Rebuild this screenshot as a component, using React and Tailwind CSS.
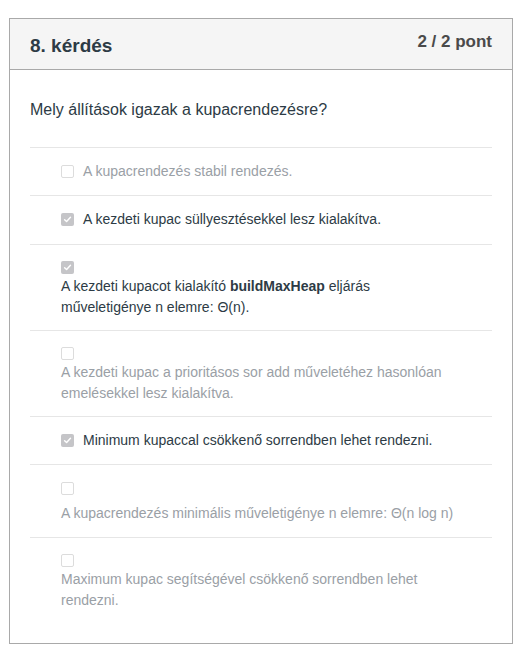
import React from "react";

function Box({ checked }) {
  if (checked) {
    return (
      <span className="inline-flex h-[13px] w-[13px] shrink-0 items-center justify-center rounded-[2px] bg-[#c5c5c8]">
        <svg width="9" height="9" viewBox="0 0 10 10" fill="none">
          <path d="M1.8 5.2 L4 7.3 L8.3 2.6" stroke="#ffffff" strokeWidth="1.6" strokeLinecap="round" strokeLinejoin="round" />
        </svg>
      </span>
    );
  }
  return <span className="inline-block h-[13px] w-[13px] shrink-0 rounded-[2px] border border-[#dcdcdc] bg-white" />;
}

export default function App() {
  const dark = "text-[#2d3b45]";
  const light = "text-[#9aa0a6]";
  return (
    <div className="min-h-[652px] bg-white pl-[9px] pt-[18px]" style={{ fontFamily: '"Liberation Sans", Arial, sans-serif' }}>
      <div className="w-[504px] border border-[#a9a9a9] bg-white">
        <div className="flex h-[51px] justify-between border-b border-[#a9a9a9] bg-[#f5f5f5] pl-[20px] pr-[20px]">
          <div className={`pt-[14px] text-[19px] font-bold leading-[26px] ${dark}`}>8. kérdés</div>
          <div className="pt-[13px] text-[17px] font-bold leading-[20px] text-[#4a4a4a]">2 / 2 pont</div>
        </div>
        <div className="px-5 pb-[32px] pt-[28px]">
          <div className={`text-[16px] leading-[24px] ${dark}`}>Mely állítások igazak a kupacrendezésre?</div>
          <div className="mt-[25px] border-t border-[#e6e6e6] text-[14px] leading-[21px]">
            <div className="flex items-center gap-[9px] border-b border-[#e6e6e6] py-[13px] pl-[31px]">
              <Box checked={false} />
              <span className={light}>A kupacrendezés stabil rendezés.</span>
            </div>
            <div className="flex items-center gap-[9px] border-b border-[#e6e6e6] pb-[14px] pt-[13px] pl-[31px]">
              <Box checked />
              <span className={dark}>A kezdeti kupac süllyesztésekkel lesz kialakítva.</span>
            </div>
            <div className="border-b border-[#e6e6e6] pb-[12px] pl-[31px] pt-[16px]">
              <div className="flex h-[13px]"><Box checked /></div>
              <div className={`mt-[2px] ${dark}`}>
                A kezdeti kupacot kialakító <b className="font-bold">buildMaxHeap</b> eljárás
                <br />
                műveletigénye n elemre: Θ(n).
              </div>
            </div>
            <div className="border-b border-[#e6e6e6] pb-[12px] pl-[31px] pt-[16px]">
              <div className="flex h-[13px]"><Box checked={false} /></div>
              <div className={`mt-[2px] ${light}`}>
                A kezdeti kupac a prioritásos sor add műveletéhez hasonlóan
                <br />
                emelésekkel lesz kialakítva.
              </div>
            </div>
            <div className="flex items-center gap-[9px] border-b border-[#e6e6e6] py-[13px] pl-[31px]">
              <Box checked />
              <span className={dark}>Minimum kupaccal csökkenő sorrendben lehet rendezni.</span>
            </div>
            <div className="border-b border-[#e6e6e6] pb-[13px] pl-[31px] pt-[17px]">
              <div className="flex h-[13px]"><Box checked={false} /></div>
              <div className={`mt-[8px] ${light}`}>A kupacrendezés minimális műveletigénye n elemre: Θ(n log n)</div>
            </div>
            <div className="pl-[31px] pt-[16px]">
              <div className="flex h-[13px]"><Box checked={false} /></div>
              <div className={`mt-[2px] ${light}`}>
                Maximum kupac segítségével csökkenő sorrendben lehet
                <br />
                rendezni.
              </div>
            </div>
          </div>
        </div>
      </div>
    </div>
  );
}
